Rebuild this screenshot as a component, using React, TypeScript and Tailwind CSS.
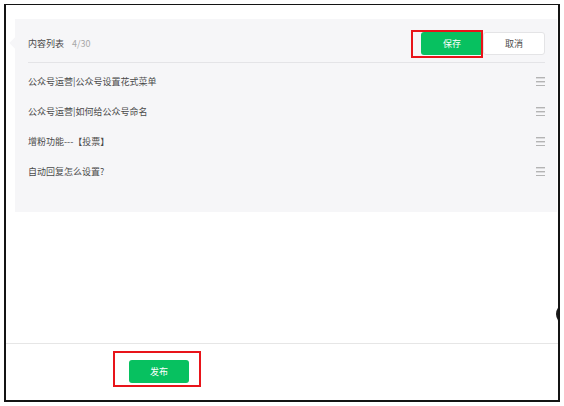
import React from "react";

const items = [
  "公众号运营|公众号设置花式菜单",
  "公众号运营|如何给公众号命名",
  "增粉功能---【投票】",
  "自动回复怎么设置?",
];

function Handle() {
  return (
    <svg width="9" height="9" viewBox="0 0 9 9" className="shrink-0">
      <rect x="0" y="0" width="9" height="1.4" fill="#b4b4b4" />
      <rect x="0" y="4" width="9" height="1.4" fill="#b4b4b4" />
      <rect x="0" y="8" width="9" height="1" fill="#b4b4b4" />
    </svg>
  );
}

export default function App() {
  return (
    <div
      className="w-[564px] h-[406px] bg-white pt-[4px] pl-[4px] overflow-hidden"
      style={{ fontFamily: '"Noto Sans CJK SC", "Noto Sans", sans-serif' }}
    >
      <div className="relative w-[556px] h-[398px] border-l-2 border-r-2 border-t border-b-2 border-[#141414] overflow-hidden">
        {/* CONTENT PANEL */}
        <div className="relative mt-[14px] ml-[9px] w-[542px] h-[193px] bg-[#f6f6f8] pl-[13px] pr-[12px] pt-[13px]">
          <div className="absolute left-[-4px] top-[20px] w-[8px] h-[8px] rotate-45 bg-[#f6f6f8]" />

          <div className="flex items-center justify-between h-[23px]">
            <div className="flex items-center text-[9px] leading-none">
              <span className="text-[#4a4a4a]">内容列表</span>
              <span className="ml-[8px] text-[#a8a8a8]">4/30</span>
            </div>
            <div className="flex items-center">
              <button className="w-[62px] h-[23px] rounded-[3px] bg-[#07c160] text-white text-[9px] leading-none">
                保存
              </button>
              <button className="w-[62px] h-[23px] rounded-[3px] bg-white border border-[#e4e4e6] text-[#4a4a4a] text-[9px] leading-none">
                取消
              </button>
            </div>
          </div>

          <div className="mt-[7px] h-px bg-[#e4e4e7]" />

          <div className="pt-[3px]">
            {items.map((t) => (
              <div key={t} className="flex items-center justify-between h-[30px]">
                <span className="text-[9px] leading-none text-[#4a4a4a]">{t}</span>
                <Handle />
              </div>
            ))}
          </div>

          {/* annotation box around save */}
          <div className="absolute left-[396px] top-[11px] w-[72px] h-[28px] border-2 border-[#e8141a]" />
        </div>

        {/* FOOTER */}
        <div className="mt-[131px] h-px bg-[#e6e6e6]" />
        <div className="relative pl-[123px] pt-[12px]">
          <button className="w-[60px] h-[23px] rounded-[3px] bg-[#07c160] text-white text-[9px] leading-none">
            发布
          </button>
          <div className="absolute left-[107px] top-[7px] w-[88px] h-[36px] border-2 border-[#e8141a]" />
        </div>

        {/* partially visible dark circle at right edge */}
        <div className="absolute left-[550px] top-[298px] w-[22px] h-[22px] rounded-full bg-[#1a1a1a]" />
      </div>
    </div>
  );
}
